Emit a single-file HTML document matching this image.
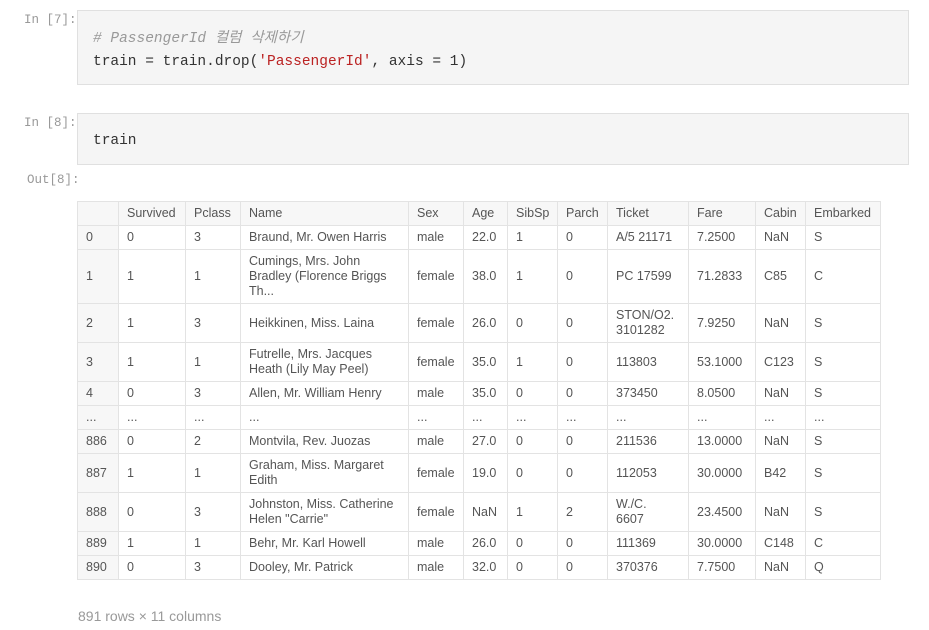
<!DOCTYPE html>
<html><head><meta charset="utf-8"><style>
body{margin:0;background:#fff;width:929px;height:630px;position:relative;overflow:hidden;font-family:"Liberation Sans","Noto Sans CJK KR",sans-serif;}
.p{position:absolute;font-family:"Liberation Mono",monospace;font-size:12.5px;color:#999;}
.cell{position:absolute;left:77px;width:830px;background:#f5f5f5;border:1px solid #e0e0e0;}
.code{position:absolute;left:15px;font-family:"Liberation Mono","Noto Sans CJK KR",monospace;font-size:14.5px;line-height:17px;color:#333;white-space:pre;}
table{position:absolute;left:77px;top:201px;border-collapse:collapse;font-size:12.5px;color:#555;table-layout:fixed;}
td,th{border:1px solid #e3e3e3;padding:0 6px 0 8px;text-align:left;font-weight:normal;line-height:15px;vertical-align:middle;}
th{background:#f7f7f7;}
td:first-child{background:#f7f7f7;}
.foot{position:absolute;left:78px;top:608px;font-size:14px;color:#999;}
</style></head><body>
<div class="p" style="left:24px;top:13px">In [7]:</div>
<div class="cell" style="top:10px;height:73px">
<div class="code" style="top:20px;color:#999;font-style:italic"># PassengerId 컬럼 삭제하기</div>
<div class="code" style="top:43px">train = train.drop(<span style="color:#b22">'PassengerId'</span>, axis = 1)</div>
</div>
<div class="p" style="left:24px;top:116px">In [8]:</div>
<div class="cell" style="top:113px;height:50px">
<div class="code" style="top:19px">train</div>
</div>
<div class="p" style="left:27px;top:173px">Out[8]:</div>
<table>
<colgroup><col style="width:41px"><col style="width:67px"><col style="width:55px"><col style="width:168px"><col style="width:55px"><col style="width:44px"><col style="width:50px"><col style="width:50px"><col style="width:81px"><col style="width:67px"><col style="width:50px"><col style="width:75px"></colgroup>
<tr style="height:24px"><th></th><th>Survived</th><th>Pclass</th><th>Name</th><th>Sex</th><th>Age</th><th>SibSp</th><th>Parch</th><th>Ticket</th><th>Fare</th><th>Cabin</th><th>Embarked</th></tr>
<tr style="height:24px"><td>0</td><td>0</td><td>3</td><td>Braund, Mr. Owen Harris</td><td>male</td><td>22.0</td><td>1</td><td>0</td><td>A/5 21171</td><td>7.2500</td><td>NaN</td><td>S</td></tr>
<tr style="height:54px"><td>1</td><td>1</td><td>1</td><td>Cumings, Mrs. John<br>Bradley (Florence Briggs<br>Th...</td><td>female</td><td>38.0</td><td>1</td><td>0</td><td>PC 17599</td><td>71.2833</td><td>C85</td><td>C</td></tr>
<tr style="height:39px"><td>2</td><td>1</td><td>3</td><td>Heikkinen, Miss. Laina</td><td>female</td><td>26.0</td><td>0</td><td>0</td><td>STON/O2.<br>3101282</td><td>7.9250</td><td>NaN</td><td>S</td></tr>
<tr style="height:39px"><td>3</td><td>1</td><td>1</td><td>Futrelle, Mrs. Jacques<br>Heath (Lily May Peel)</td><td>female</td><td>35.0</td><td>1</td><td>0</td><td>113803</td><td>53.1000</td><td>C123</td><td>S</td></tr>
<tr style="height:24px"><td>4</td><td>0</td><td>3</td><td>Allen, Mr. William Henry</td><td>male</td><td>35.0</td><td>0</td><td>0</td><td>373450</td><td>8.0500</td><td>NaN</td><td>S</td></tr>
<tr style="height:24px"><td>...</td><td>...</td><td>...</td><td>...</td><td>...</td><td>...</td><td>...</td><td>...</td><td>...</td><td>...</td><td>...</td><td>...</td></tr>
<tr style="height:24px"><td>886</td><td>0</td><td>2</td><td>Montvila, Rev. Juozas</td><td>male</td><td>27.0</td><td>0</td><td>0</td><td>211536</td><td>13.0000</td><td>NaN</td><td>S</td></tr>
<tr style="height:39px"><td>887</td><td>1</td><td>1</td><td>Graham, Miss. Margaret<br>Edith</td><td>female</td><td>19.0</td><td>0</td><td>0</td><td>112053</td><td>30.0000</td><td>B42</td><td>S</td></tr>
<tr style="height:39px"><td>888</td><td>0</td><td>3</td><td>Johnston, Miss. Catherine<br>Helen "Carrie"</td><td>female</td><td>NaN</td><td>1</td><td>2</td><td>W./C.<br>6607</td><td>23.4500</td><td>NaN</td><td>S</td></tr>
<tr style="height:24px"><td>889</td><td>1</td><td>1</td><td>Behr, Mr. Karl Howell</td><td>male</td><td>26.0</td><td>0</td><td>0</td><td>111369</td><td>30.0000</td><td>C148</td><td>C</td></tr>
<tr style="height:24px"><td>890</td><td>0</td><td>3</td><td>Dooley, Mr. Patrick</td><td>male</td><td>32.0</td><td>0</td><td>0</td><td>370376</td><td>7.7500</td><td>NaN</td><td>Q</td></tr>
</table>
<div class="foot">891 rows × 11 columns</div>
</body></html>
